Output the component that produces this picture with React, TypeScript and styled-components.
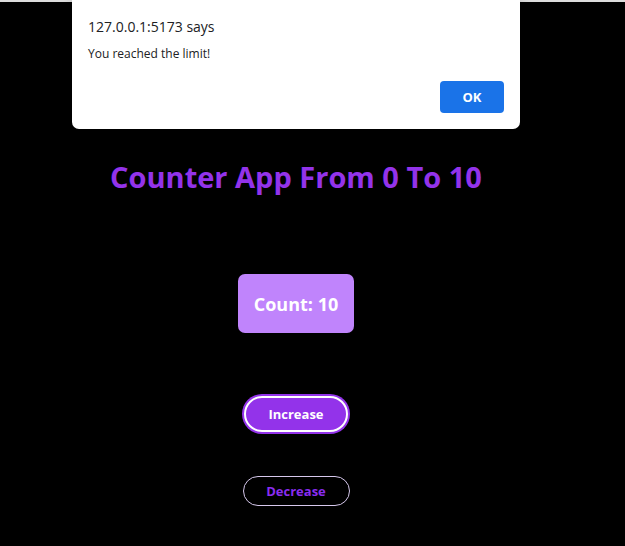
import { useState } from "react";
import styled, { createGlobalStyle } from "styled-components";

const GlobalStyle = createGlobalStyle`
    html, body {
        margin: 0;
        padding: 0;
        background: #000;
        font-family: "Open Sans", "Noto Sans", "Liberation Sans", sans-serif;
    }
`;

const MAX = 10;

export default function App() {
    const [count, setCount] = useState(10);
    const [showAlert, setShowAlert] = useState(true);

    const increase = () => {
        if (count >= MAX) {
            setShowAlert(true);
            return;
        }
        setCount(count + 1);
    };

    const decrease = () => {
        if (count > 0) setCount(count - 1);
    };

    return (
        <Page>
            <GlobalStyle />
            <TopEdge />
            <Main>
                <Title>Counter App From 0 To {MAX}</Title>
                <CountBox>Count: {count}</CountBox>
                <Button $variant="primary" onClick={increase}>Increase</Button>
                <Button $variant="outline" onClick={decrease}>Decrease</Button>
            </Main>
            {showAlert && (
                <Dialog role="alertdialog">
                    <DialogTitle>127.0.0.1:5173 says</DialogTitle>
                    <DialogMessage>You reached the limit!</DialogMessage>
                    <DialogActions>
                        <OkButton onClick={() => setShowAlert(false)}>OK</OkButton>
                    </DialogActions>
                </Dialog>
            )}
        </Page>
    );
}

const Page = styled.div`
    position: relative;
    min-height: 546px;
    background: #000;
`;

const TopEdge = styled.div`
    height: 2px;
    background: #dcdcdc;
`;

const Main = styled.main`
    width: 576px;
    margin-left: 8px;
    display: flex;
    flex-direction: column;
    align-items: center;
`;

const Title = styled.h1`
    margin: 157px 0 0;
    font-size: 29px;
    line-height: 36px;
    font-weight: 700;
    color: #9333ea;
    white-space: nowrap;
`;

const CountBox = styled.div`
    margin-top: 79px;
    width: 116px;
    height: 59px;
    display: flex;
    align-items: center;
    justify-content: center;
    background: #c084fc;
    border-radius: 7px;
    color: #fff;
    font-size: 18px;
    font-weight: 700;
`;

const Button = styled.button<{ $variant: "primary" | "outline" }>`
    display: flex;
    align-items: center;
    justify-content: center;
    font-family: inherit;
    font-size: 13px;
    font-weight: 700;
    border-radius: 999px;
    cursor: pointer;
    padding: 0;

    ${({ $variant }) =>
        $variant === "primary"
            ? `
        margin-top: 63px;
        width: 104px;
        height: 36px;
        background: #9333ea;
        color: #fff;
        border: 2px solid #fff;
        box-shadow: 0 0 0 2px #9333ea;
    `
            : `
        margin-top: 44px;
        width: 107px;
        height: 30px;
        background: #000;
        color: #8a2cf0;
        border: 1px solid #d6c8ec;
    `}
`;

const Dialog = styled.div`
    position: absolute;
    top: 0;
    left: 72px;
    width: 448px;
    height: 129px;
    box-sizing: border-box;
    padding: 17px 16px 0;
    background: #fff;
    border-radius: 0 0 7px 7px;
    box-shadow: 0 4px 12px rgba(0, 0, 0, 0.4);
    color: #202124;
`;

const DialogTitle = styled.div`
    font-size: 14px;
    line-height: 20px;
`;

const DialogMessage = styled.div`
    margin-top: 8px;
    font-size: 12px;
    line-height: 18px;
`;

const DialogActions = styled.div`
    margin-top: 18px;
    display: flex;
    justify-content: flex-end;
`;

const OkButton = styled.button`
    width: 64px;
    height: 32px;
    border: none;
    border-radius: 4px;
    background: #1a73e8;
    color: #fff;
    font-family: inherit;
    font-size: 13px;
    font-weight: 700;
    cursor: pointer;
`;
